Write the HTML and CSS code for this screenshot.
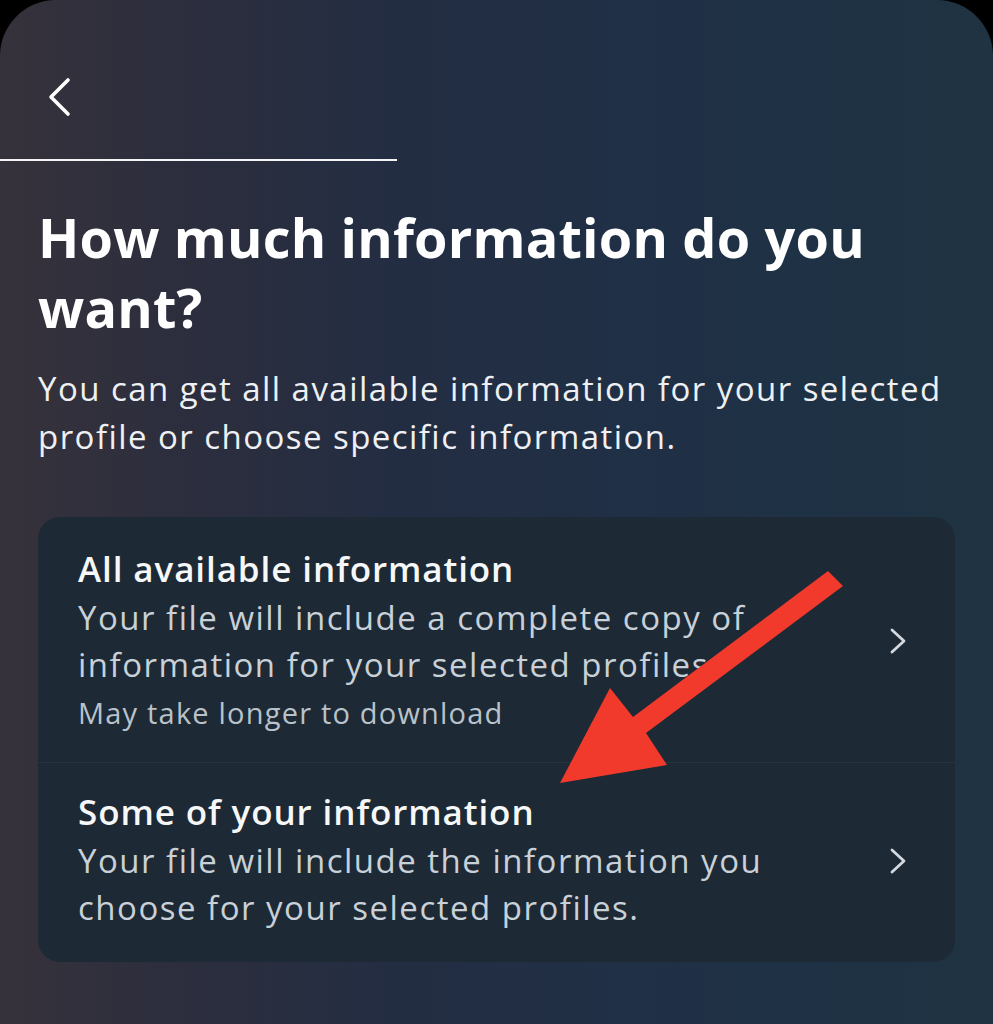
FILE: index.html
```html
<!DOCTYPE html>
<html lang="en">
<head>
    <meta charset="UTF-8">
    <meta name="viewport" content="width=device-width, initial-scale=1.0">
    <title>Download your information</title>
    <link rel="stylesheet" href="styles.css">
</head>
<body>
    <div class="screen">
        <!-- Top bar -->
        <div class="topbar">
            <button class="back-btn" aria-label="Back">
                <svg width="26" height="40" viewBox="0 0 26 40">
                    <path d="M22 3 L5 20 L22 37" fill="none" stroke="#fff" stroke-width="3.6" stroke-linecap="round" stroke-linejoin="round"/>
                </svg>
            </button>
        </div>
        <div class="progress-rule"></div>

        <div class="content">
            <h1>How much information do you want?</h1>
            <p class="lead">You can get all available information for your selected profile or choose specific information.</p>

            <!-- Options -->
            <div class="options">
                <div class="option">
                    <div class="option-text">
                        <div class="option-title">All available information</div>
                        <div class="option-desc">Your file will include a complete copy of information for your selected profiles.</div>
                        <div class="option-note">May take longer to download</div>
                    </div>
                    <svg class="chevron" width="18" height="28" viewBox="0 0 18 28">
                        <path d="M3 3 L15 14 L3 25" fill="none" stroke="#d3d9df" stroke-width="2.8" stroke-linecap="round" stroke-linejoin="round"/>
                    </svg>
                </div>
                <div class="option">
                    <div class="option-text">
                        <div class="option-title">Some of your information</div>
                        <div class="option-desc">Your file will include the information you choose for your selected profiles.</div>
                    </div>
                    <svg class="chevron" width="18" height="28" viewBox="0 0 18 28">
                        <path d="M3 3 L15 14 L3 25" fill="none" stroke="#d3d9df" stroke-width="2.8" stroke-linecap="round" stroke-linejoin="round"/>
                    </svg>
                </div>
            </div>
        </div>

        <!-- annotation arrow drawn on top of the screenshot -->
        <svg class="annotation" width="993" height="1024" viewBox="0 0 993 1024">
            <polygon points="828,571 843,586 646,733 667,765 560,783 610,688 633,717" fill="#f23a2c"/>
        </svg>
    </div>
</body>
</html>
```

FILE: styles.css
```css
html, body {
    margin: 0;
    padding: 0;
}
body {
    background-color: #000;
    font-family: "Open Sans", "Noto Sans", sans-serif;
    color: #fff;
}
.screen {
    position: relative;
    min-height: 1024px;
    border-radius: 56px 56px 0 0;
    background: linear-gradient(90deg, #36323b 0%, #2d2e3d 16%, #232d42 40%, #1f3046 68%, #1f3342 100%);
    overflow: hidden;
}
.topbar {
    padding: 77px 0 0 46px;
    height: 40px;
}
.back-btn {
    display: block;
    padding: 0;
    border: none;
    background: transparent;
    cursor: pointer;
}
.back-btn svg {
    display: block;
}
.progress-rule {
    width: 397px;
    height: 2px;
    margin-top: 42px;
    background-color: #f4f4f6;
}
.content {
    padding: 0 38px;
}
h1 {
    margin: 41px 0 0;
    font-size: 54px;
    font-weight: 700;
    line-height: 70px;
    letter-spacing: 0.2px;
}
.lead {
    margin: 23px 0 0;
    font-size: 33px;
    line-height: 48px;
    letter-spacing: 1.45px;
    color: #eef0f3;
}
.options {
    margin-top: 56px;
    background-color: #1d2934;
    border-radius: 22px;
    overflow: hidden;
}
.option {
    display: flex;
    align-items: center;
    gap: 24px;
    padding: 30px 48px 27px 40px;
}
.option + .option {
    border-top: 1px solid #27343f;
    padding-top: 27px;
    padding-bottom: 31px;
}
.option-text {
    flex: 1;
}
.option-title {
    font-size: 35px;
    font-weight: 600;
    line-height: 44px;
    letter-spacing: 0.9px;
    color: #f6f7f8;
}
.option-desc {
    margin-top: 3px;
    font-size: 33px;
    line-height: 47px;
    letter-spacing: 1.5px;
    color: #c8d0d8;
}
.option-note {
    margin-top: 3px;
    font-size: 29px;
    line-height: 44px;
    letter-spacing: 1.2px;
    color: #b9c2ca;
}
.chevron {
    flex-shrink: 0;
}
.annotation {
    position: absolute;
    top: 0;
    left: 0;
    pointer-events: none;
}
```
